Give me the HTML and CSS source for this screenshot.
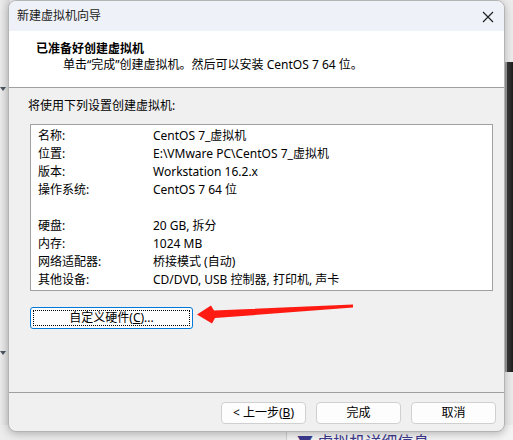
FILE: index.html
```html
<!DOCTYPE html>
<html lang="zh-CN">
<head>
<meta charset="utf-8">
<title>新建虚拟机向导</title>
<link rel="stylesheet" href="styles.css">
</head>
<body>
<div class="desktop">
  <div class="left-strip">
    <span class="tri tri-top"></span>
    <span class="tri tri-bottom"></span>
  </div>
  <div class="right-strip"></div>
  <div class="below">
    <div class="below-left"></div>
    <div class="below-right"><span class="below-text">▼ 虚拟机详细信息</span></div>
  </div>

  <div class="dialog">
    <div class="titlebar">
      <span class="title">新建虚拟机向导</span>
      <svg class="close" width="12" height="12" viewBox="0 0 12 12"><path d="M1 1 L11 11 M11 1 L1 11" stroke="#1b1b1b" stroke-width="1.1" fill="none"/></svg>
    </div>
    <div class="header">
      <div class="h-title">已准备好创建虚拟机</div>
      <div class="h-sub">单击“完成”创建虚拟机。然后可以安装 CentOS 7 64 位。</div>
    </div>
    <div class="body">
      <div class="intro">将使用下列设置创建虚拟机:</div>
      <div class="list">
        <div class="row"><span class="k">名称:</span><span class="v">CentOS 7_虚拟机</span></div>
        <div class="row"><span class="k">位置:</span><span class="v">E:\VMware PC\CentOS 7_虚拟机</span></div>
        <div class="row"><span class="k">版本:</span><span class="v">Workstation 16.2.x</span></div>
        <div class="row"><span class="k">操作系统:</span><span class="v">CentOS 7 64 位</span></div>
        <div class="row"></div>
        <div class="row"><span class="k">硬盘:</span><span class="v">20 GB, 拆分</span></div>
        <div class="row"><span class="k">内存:</span><span class="v">1024 MB</span></div>
        <div class="row"><span class="k">网络适配器:</span><span class="v">桥接模式 (自动)</span></div>
        <div class="row"><span class="k">其他设备:</span><span class="v">CD/DVD, USB 控制器, 打印机, 声卡</span></div>
      </div>
      <button class="custom"><span class="focus">自定义硬件(<u>C</u>)...</span></button>
    </div>
    <div class="footer">
      <button class="btn">&lt; 上一步(<u>B</u>)</button>
      <button class="btn">完成</button>
      <button class="btn">取消</button>
    </div>
  </div>

  <svg class="arrow" width="513" height="440" viewBox="0 0 513 440">
    <polygon points="353,304.5 214,310.5 211,305.5 197,314.5 212,323.5 215,318 353,307.5" fill="#ff1a12"/>
  </svg>
</div>
</body>
</html>
```

FILE: styles.css
```css
* { box-sizing: border-box; }
html, body {
  margin: 0;
  padding: 0;
  width: 513px;
  height: 440px;
  overflow: hidden;
}
body {
  font-family: "Noto Sans", "Noto Sans CJK SC", sans-serif;
  font-size: 12px;
  color: #000;
  background: #ececec;
}
.desktop {
  position: relative;
  width: 513px;
  height: 440px;
  background: #ececec;
}
.left-strip {
  position: absolute;
  left: 0;
  top: 0;
  width: 10px;
  height: 440px;
  background: linear-gradient(to right, #ebebeb, #dcdcdc);
}
.tri {
  position: absolute;
  left: 0;
  width: 0;
  height: 0;
  border-left: 3px solid transparent;
  border-right: 3px solid transparent;
  border-top: 4px solid #4a5560;
}
.tri-top { top: 87px; }
.tri-bottom { top: 351px; }
.right-strip {
  position: absolute;
  left: 505px;
  top: 62px;
  width: 8px;
  height: 310px;
  background: linear-gradient(to right, #9a9a9a 0, #9a9a9a 2px, #3c3c3c 2px, #1e1e1e 100%);
}
.below {
  position: absolute;
  left: 0;
  top: 425px;
  width: 513px;
  height: 15px;
  display: flex;
}
.below-left {
  width: 287px;
  background: #ececec;
  border-right: 1px solid #cfcfcf;
}
.below-right {
  flex: 1;
  background: #f4f4f4;
  padding-left: 10px;
  overflow: hidden;
}
.below-text {
  display: block;
  color: #3d3a8f;
  font-size: 16px;
  line-height: 16px;
  margin-top: 9px;
}
.dialog {
  position: absolute;
  left: 8px;
  top: 0;
  width: 497px;
  height: 432px;
  border: 1px solid #b4b4b4;
  border-radius: 8px;
  background: #f0f0f0;
  box-shadow: 0 2px 8px rgba(0,0,0,0.25);
  overflow: hidden;
  display: flex;
  flex-direction: column;
}
.titlebar {
  height: 30px;
  flex: none;
  background: #eef1f8;
  display: flex;
  align-items: center;
  justify-content: space-between;
  padding: 0 10px 0 8px;
}
.title {
  font-size: 12px;
  line-height: 14px;
  color: #1a1a1a;
}
.close { display: block; margin-top: 1px; }
.header {
  height: 57px;
  flex: none;
  background: #fff;
  border-bottom: 1px solid #a0a0a0;
  padding: 10px 0 0 27px;
}
.h-title {
  font-weight: bold;
  line-height: 16px;
  height: 16px;
}
.h-sub {
  line-height: 16px;
  padding-left: 27px;
}
.body {
  height: 305px;
  flex: none;
  border-bottom: 1px solid #a0a0a0;
  padding: 10px 12px 0 19px;
}
.intro {
  line-height: 16px;
  height: 16px;
}
.list {
  margin-top: 10px;
  margin-left: 2px;
  width: 463px;
  height: 167px;
  background: #fff;
  border: 1px solid #a0a0a0;
  padding: 2px 0 0 7px;
}
.row {
  display: flex;
  height: 18px;
  line-height: 18px;
  white-space: nowrap;
}
.k { width: 115px; flex: none; }
.v { flex: none; }
.custom {
  display: block;
  margin-top: 16px;
  margin-left: 2px;
  width: 163px;
  height: 22px;
  padding: 2px;
  font: inherit;
  border: 1px solid #0078d7;
  border-radius: 3px;
  background: #fdfdfd;
  cursor: default;
}
.custom .focus {
  display: block;
  height: 100%;
  border: 1px dotted #000;
  line-height: 14px;
  text-align: center;
}
.footer {
  flex: 1;
  display: flex;
  justify-content: flex-end;
  align-items: flex-start;
  gap: 10px;
  padding: 9px 8px 0 0;
}
.btn {
  width: 85px;
  height: 22px;
  font: inherit;
  border: 1px solid #d0d0d0;
  border-radius: 4px;
  background: #fdfdfd;
  padding: 0;
  line-height: 18px;
  cursor: default;
}
.arrow {
  position: absolute;
  left: 0;
  top: 0;
  pointer-events: none;
}
```
